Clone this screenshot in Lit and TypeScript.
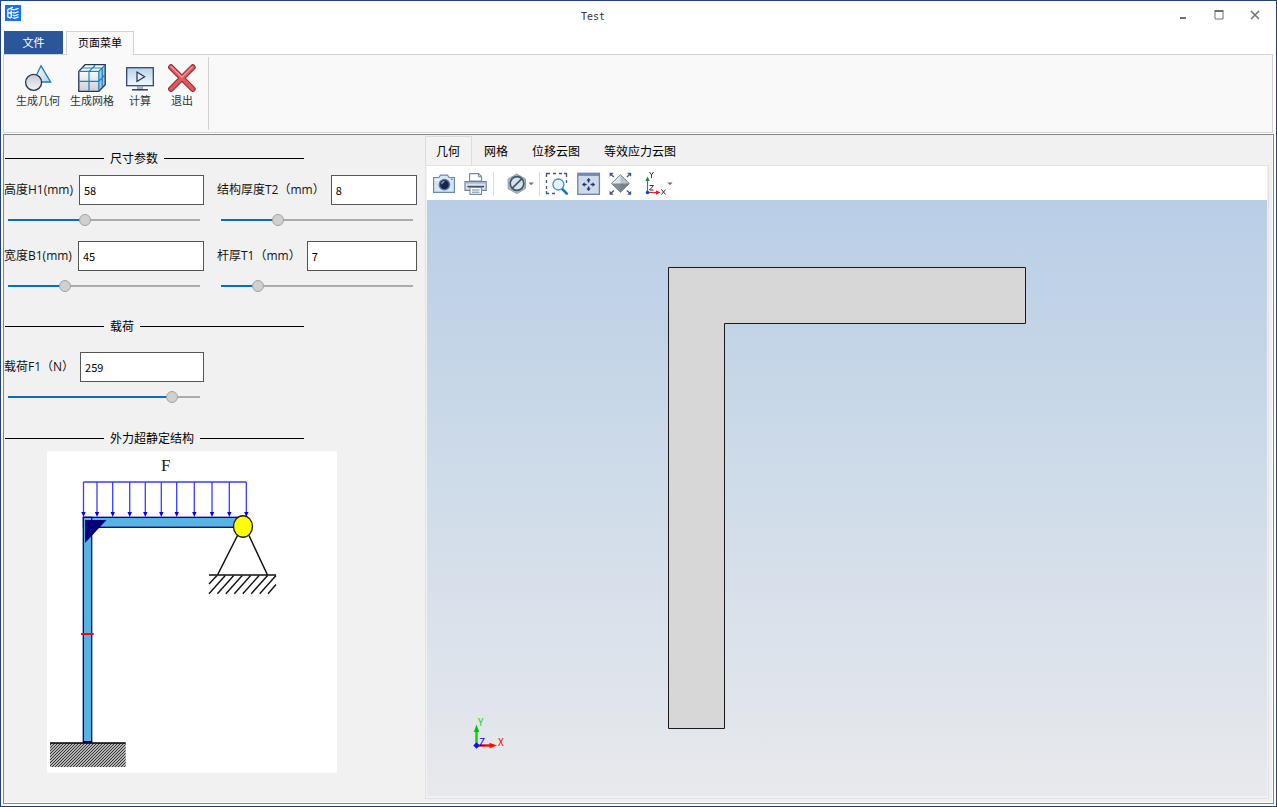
import { LitElement, html, svg, css } from "lit";
import { customElement, property, state } from "lit/decorators.js";

interface Param {
  key: string;
  label: string;
  value: number;
  max: number;
}

const SIZE_PARAMS: Param[] = [
  { key: "h1", label: "高度H1(mm)", value: 58, max: 147 },
  { key: "t2", label: "结构厚度T2（mm）", value: 8, max: 28 },
  { key: "b1", label: "宽度B1(mm)", value: 45, max: 159 },
  { key: "t1", label: "杆厚T1（mm）", value: 7, max: 41 },
];

const LOAD_PARAMS: Param[] = [{ key: "f1", label: "载荷F1（N）", value: 259, max: 295 }];

/* ---------- icons ---------- */

const logoIcon = html`<svg width="16" height="16" viewBox="0 0 16 16" aria-hidden="true">
  <rect width="16" height="16" fill="#1473e6" />
  <path d="M2.600 4.600 8 2.200M2.800 4.500v7.500M2.600 8h3.200M2.600 11.900 6 13.200M6.200 5.500v7.500" stroke="#fff" stroke-width="1.300" fill="none" />
  <path d="M5.500 3.800 9 4.900l4.600-1.600M7.500 7.300l2 .8 4-1.400M7.500 10l2 .9 4-1.400M7.500 12.500l2 .8 4-1.400" stroke="#fff" stroke-width="1.300" fill="none" />
</svg>`;

const geometryIcon = html`<svg width="28" height="28" viewBox="0 0 28 28" aria-hidden="true">
  <defs>
    <linearGradient id="tri" x1="0" y1="0" x2="1" y2="1"><stop offset="0" stop-color="#fff" /><stop offset="1" stop-color="#b4d4ee" /></linearGradient>
    <linearGradient id="ball" x1="0" y1="0" x2="0" y2="1"><stop offset="0" stop-color="#c6cad4" /><stop offset="1" stop-color="#f4f4f8" /></linearGradient>
  </defs>
  <path d="M17 1.800 26.600 18H9z" fill="url(#tri)" stroke="#1e78b8" stroke-width="1.300" />
  <circle cx="9.600" cy="18.400" r="8" fill="url(#ball)" stroke="#26324f" stroke-width="1.300" />
</svg>`;

const meshIcon = html`<svg width="28" height="28" viewBox="0 0 28 28" aria-hidden="true">
  <defs>
    <linearGradient id="cube" x1="0" y1="0" x2="0" y2="1"><stop offset="0" stop-color="#fafbfd" /><stop offset="1" stop-color="#c9cdd8" /></linearGradient>
  </defs>
  <path d="M.8 7.400 7 .7h20.200l-6.400 6.700z" fill="#fff" />
  <path d="M20.800 7.400 27.200.7v20l-6.400 6.600z" fill="#a9c6e0" />
  <path d="M.8 7.400h20v20H.8z" fill="url(#cube)" />
  <path d="M.8 7.400 7 .7h20.200v20l-6.400 6.600H.8z" fill="none" stroke="#26324f" stroke-width="1.300" />
  <path d="M1.400 7.400h19.400v19.400M20.800 7.400l6-6.200M11 7.400v19.400M1.400 17.400h19.400l5.800-6.200M11 7.400 17.200 1.300M4.400 4h19.800v19.200" fill="none" stroke="#1580c4" stroke-width="1.200" />
</svg>`;

const computeIcon = html`<svg width="28" height="28" viewBox="0 0 28 28" aria-hidden="true">
  <defs>
    <linearGradient id="screen" x1="0" y1="0" x2="0" y2="1"><stop offset="0" stop-color="#b6d3ea" /><stop offset="1" stop-color="#f3f8fc" /></linearGradient>
  </defs>
  <rect x=".7" y="3.700" width="26.600" height="18" fill="url(#screen)" stroke="#33486c" stroke-width="1.300" />
  <path d="M11 8v9.400l7.600-4.700z" fill="#e2edf7" stroke="#22304f" stroke-width="1.200" />
  <path d="M11.500 22.300h5v3.400h-5z" fill="#aab4c6" stroke="#7d8aa2" stroke-width=".6" />
  <path d="M6 25.800h16" stroke="#26324f" stroke-width="1.400" />
</svg>`;

const exitIcon = html`<svg width="28" height="28" viewBox="0 0 28 28" aria-hidden="true">
  <path d="M3 3.200 24.800 25M24.800 3.200 3 25" stroke="#8c2c33" stroke-width="5.800" stroke-linecap="round" />
  <path d="M3 3.200 24.800 25M24.800 3.200 3 25" stroke="#dd5a5c" stroke-width="3.800" stroke-linecap="round" />
  <path d="M3 2.600 13.900 13.400 24.400 2.800" fill="none" stroke="#f0a09c" stroke-width="1.200" stroke-linecap="round" />
</svg>`;

const cameraIcon = html`<svg width="24" height="24" viewBox="0 0 24 24" aria-hidden="true">
  <path d="M1.600 5.500h5.200l1.800-2.400h6.800l1.800 2.400h5.200v14.900H1.600z" fill="#d5e6f5" stroke="#6d86ae" stroke-width="1.200" />
  <path d="M2.600 8h18.800" stroke="#fff" />
  <circle cx="12.400" cy="12.600" r="5.900" fill="#5c749b" />
  <circle cx="12.400" cy="12.600" r="4.400" fill="#13254b" />
  <path d="M9.800 12.200a2.600 2.600 0 0 1 2.600-2.600" fill="none" stroke="#9db4d6" stroke-width="1.100" />
  <path d="M18.700 7.400h2" stroke="#6d86ae" stroke-width="1.400" />
</svg>`;

const printerIcon = html`<svg width="24" height="24" viewBox="0 0 24 24" aria-hidden="true">
  <path d="M5.600 9V1.600h9l3 3V9z" fill="#fff" stroke="#7787a3" stroke-width="1.100" />
  <path d="M14.400 1.600v3.200h3.200" fill="none" stroke="#7787a3" />
  <path d="M1 9.600h21.200v8.800H1z" fill="#dde3ee" stroke="#6f82a6" stroke-width="1.200" />
  <path d="M2 10.800h19.500" stroke="#a5b2c9" stroke-width="1.600" />
  <path d="M3.400 14.600h16.600" stroke="#33476e" stroke-width="1.600" />
  <path d="M6 15.400h11.500v7H6z" fill="#fff" stroke="#7787a3" stroke-width="1.100" />
  <path d="M8 18h7.500M8 20.200h7.500" stroke="#6f82a6" />
</svg>`;

const hideIcon = html`<svg width="30" height="24" viewBox="0 0 30 24" aria-hidden="true">
  <path d="m10.800 2 8.700 5v9.600l-8.700 5-8.700-5V7z" fill="#a9b8c2" stroke="#8fa1ad" />
  <circle cx="11" cy="11.500" r="6.800" fill="#d7e3ea" stroke="#3f586c" stroke-width="1.700" />
  <path d="M6.300 16.200 15.700 6.800" stroke="#3f586c" stroke-width="1.700" />
  <path d="M22.600 10.500h5.200l-2.600 2.800z" fill="#707070" />
</svg>`;

const zoomAreaIcon = html`<svg width="24" height="24" viewBox="0 0 24 24" aria-hidden="true">
  <path d="M1.500 5V1.500H5M8 1.500h3M14 1.500h3M19 1.500h2.500V5M21.500 8v3M1.500 8v3M1.500 14v3M1.500 19v2.500H4M7 21.500h3" fill="none" stroke="#3c5583" stroke-width="1.300" />
  <path d="m17.200 17 4.600 4.600" stroke="#1a73b8" stroke-width="2.600" stroke-linecap="round" />
  <circle cx="13.400" cy="12.500" r="5.500" fill="#e6f3fa" stroke="#3f8fbd" stroke-width="1.300" />
</svg>`;

const fitIcon = html`<svg width="24" height="24" viewBox="0 0 24 24" aria-hidden="true">
  <rect x=".8" y="1.300" width="21.600" height="21" fill="#cfdae9" stroke="#6880a8" stroke-width="1.300" />
  <path d="M1 2.600h21.200" stroke="#7189b2" stroke-width="2.600" />
  <path d="M11.600 7.500v3M11.600 14.500v3M6.600 12.500h3M13.600 12.500h3" stroke="#1e3566" stroke-width="1.600" />
  <path d="m9.400 8.600 2.200-2.700 2.200 2.700zM9.400 16.400l2.200 2.700 2.200-2.700zM7.700 10.300 5 12.500l2.700 2.200zM15.500 10.300l2.700 2.200-2.700 2.200z" fill="#1e3566" />
</svg>`;

const isoIcon = html`<svg width="24" height="24" viewBox="0 0 24 24" aria-hidden="true">
  <path d="m11.400 2.800 9 8.700-9 8.800-9-8.800z" fill="#e1e4e8" stroke="#7e8896" />
  <path d="M2.400 11.500h18l-9 8.800z" fill="#838c99" />
  <path d="M11.400 2.800v17.500l9-8.800z" fill="#59616e" fill-opacity=".25" />
  <path d="M4.800 5 1.500 1.700M18 5l3.300-3.300M4.800 18.500l-3.300 3.300M18 18.500l3.300 3.300" stroke="#3c5583" stroke-width="1.300" />
  <path d="M.6.800h4L.6 4.800zM22.200.800h-4l4 4zM.6 22.700h4l-4-4zM22.200 22.700h-4l4-4z" fill="#3c5583" />
</svg>`;

const axesIcon = html`<svg width="30" height="24" viewBox="0 0 30 24" aria-hidden="true">
  <path d="M2.500 20V7" stroke="#1c9a4a" stroke-width="1.200" />
  <path d="m.3 9 2.200-4.500L4.700 9z" fill="#1c8a44" />
  <path d="M2.500 20.500h10" stroke="#e0202a" stroke-width="1.300" />
  <path d="m11 18.300 4.500 2.200-4.500 2.200z" fill="#e0202a" />
  <circle cx="2.500" cy="20.500" r="1.700" fill="#1c3c9a" />
  <path d="m4.500 0 2 2.800L8.500 0M6.500 2.800V6M4.500 13.500h4L4.500 18h4M16.500 17.500l4 5M20.500 17.500l-4 5" fill="none" stroke="#333" />
  <path d="M22.400 10.500h5.200L25 13.300z" fill="#707070" />
</svg>`;

/* ---------- slider field ---------- */

@customElement("param-field")
class ParamField extends LitElement {
  static styles = css`
    :host {
      display: flex;
      flex-direction: column;
      gap: 5px;
      min-width: 0;
    }
    .row {
      display: flex;
      align-items: center;
      gap: 6px;
    }
    .label {
      flex: none;
      font: 12px/16px "Open Sans", "Noto Sans CJK SC", sans-serif;
      color: #111;
    }
    .box {
      box-sizing: border-box;
      flex: 1;
      min-width: 0;
      width: 0;
      height: 30px;
      padding: 0 4px;
      border: 1px solid #555;
      border-radius: 0;
      background: #fff;
      color: #000;
      font: 11px/16px "Noto Sans CJK SC", sans-serif;
      outline: none;
    }
    .range {
      appearance: none;
      -webkit-appearance: none;
      box-sizing: border-box;
      height: 20px;
      margin: 0 4px;
      background: none;
      outline: none;
    }
    .range::-webkit-slider-runnable-track {
      height: 2px;
      background: linear-gradient(
        to right,
        #0a6cbf calc(6px + (100% - 12px) * var(--fill)),
        #ababab calc(6px + (100% - 12px) * var(--fill))
      );
    }
    .range::-webkit-slider-thumb {
      -webkit-appearance: none;
      box-sizing: border-box;
      width: 12px;
      height: 12px;
      margin-top: -5px;
      border: 1px solid #a3a3a3;
      border-radius: 50%;
      background: #d0d0d0;
    }
  `;

  @property({ attribute: false }) param!: Param;
  @state() private current = 0;

  willUpdate(changed: Map<string, unknown>) {
    if (changed.has("param")) this.current = this.param.value;
  }

  private onInput(e: Event) {
    const n = Number((e.target as HTMLInputElement).value);
    if (!Number.isNaN(n)) this.current = Math.min(this.param.max, Math.max(0, n));
  }

  render() {
    const { key, label, max } = this.param;
    return html`
      <div class="row">
        <label class="label" for=${key}>${label}</label>
        <input class="box" id=${key} type="text" .value=${String(this.current)} @change=${this.onInput} />
      </div>
      <input
        class="range"
        type="range"
        aria-label=${label}
        min="0"
        max=${max}
        .value=${String(this.current)}
        style="--fill:${this.current / max}"
        @input=${this.onInput}
      />
    `;
  }
}

/* ---------- structural sketch ---------- */

@customElement("structure-sketch")
class StructureSketch extends LitElement {
  static styles = css`
    :host {
      display: block;
    }
    .sketch {
      display: block;
      width: 290px;
      background: #fff;
    }
    .force {
      font-family: "Liberation Serif", serif;
      font-size: 17px;
      fill: #222;
    }
  `;

  render() {
    const arrows = [36.500, 50, 65.700, 82.700, 98.300, 114.300, 129.700, 147.300, 165, 182.300, 199.300];
    const hatch = [0, 1, 2, 3, 4, 5, 6];
    return html`<svg class="sketch" viewBox="0 0 290 322" role="img" aria-label="外力超静定结构">
      <defs>
        <pattern id="soil" width="3" height="3" patternUnits="userSpaceOnUse">
          <rect width="3" height="3" fill="#b4b4b4" />
          <path d="M-1 1 1-1M0 3 3 0M2 4 4 2" stroke="#333" stroke-width="1" />
        </pattern>
      </defs>
      <text class="force" x="114" y="20">F</text>
      <path d="M36.500 31H199.300" stroke="#3a3aff" stroke-width="1.500" />
      ${arrows.map(
        (x) => svg`<path d="M${x} 31V62" stroke="#3c3cff" stroke-width="1.300" />
          <path d="M${x - 2.200} 61h4.400L${x} 66z" fill="#0000e6" />`
      )}
      <rect x="36.500" y="66.300" width="154" height="10" fill="#56b4e2" stroke="#00007c" stroke-width="1.300" />
      <rect x="36.300" y="66.300" width="8.400" height="224.700" fill="#56b4e2" stroke="#00007c" stroke-width="1.300" />
      <path d="M38 69h21.500L38 92z" fill="#00007c" />
      <path d="M34 183h12.700" stroke="#f00" stroke-width="2" />
      <path d="M190.500 84.500 170.500 124M202 84.500 220.500 124M162 124h67" stroke="#111" stroke-width="1.500" />
      <path
        d="M162 133 170 124.500M221 142.700 229 133.500"
        stroke="#111"
        stroke-width="1.400"
      />
      ${hatch.map(
        (i) => svg`<path d="M${162 + i * 8.450} 142.700 L${178.300 + i * 8.450} 124.500" stroke="#111" stroke-width="1.400" />`
      )}
      <ellipse cx="196" cy="75.500" rx="9.500" ry="10.800" fill="#ff0" stroke="#222" stroke-width="1.400" />
      <rect x="3" y="292" width="75.700" height="24" fill="url(#soil)" />
      <path d="M3 292h75.700" stroke="#000" stroke-width="1.500" />
      <path d="M36 291h9" stroke="#00004c" stroke-width="2" />
    </svg>`;
  }
}

/* ---------- application window ---------- */

@customElement("app-root")
class AppRoot extends LitElement {
  static styles = css`
    :host {
      display: flex;
      flex-direction: column;
      box-sizing: border-box;
      min-height: 100vh;
      padding: 0 2px 2px;
      border: 1px solid #1f4278;
      background: #fff;
      font: 12px/16px "Noto Sans CJK SC", sans-serif;
      color: #000;
    }
    button {
      margin: 0;
      padding: 0;
      border: 0;
      border-radius: 0;
      background: none;
      font: inherit;
      color: inherit;
    }
    svg {
      display: block;
    }

    .titlebar {
      display: flex;
      align-items: flex-start;
      height: 30px;
      padding: 0 1px 0 2px;
    }
    .logo {
      padding-top: 4px;
    }
    .title {
      flex: 1;
      margin: 0;
      padding-top: 8px;
      text-align: center;
      font: 10px/16px "DejaVu Sans Mono", monospace;
      color: #333;
    }
    .winbtn {
      display: grid;
      place-items: center;
      width: 36px;
      height: 28px;
    }

    .ribbon-tabs {
      display: flex;
      align-items: flex-end;
      gap: 3px;
      padding-left: 1px;
      font-size: 11px;
    }
    .file {
      width: 59px;
      height: 23px;
      padding-bottom: 2px;
      background: #2b579a;
      color: #fff;
    }
    .page-tab {
      position: relative;
      box-sizing: border-box;
      height: 24px;
      margin-bottom: -1px;
      padding: 0 11px 3px;
      border: 1px solid #d2d2d2;
      border-bottom: 0;
      background: #f9f9f9;
    }
    .ribbon {
      display: flex;
      box-sizing: border-box;
      height: 79px;
      margin-right: 1px;
      padding: 2px 0;
      border: 1px solid #d2d2d2;
      background: #f9f9f9;
    }
    .ribbon-group {
      display: flex;
      align-items: flex-start;
      padding: 7px 5px 0 7px;
      border-right: 1px solid #d2d2d2;
    }
    .action {
      display: flex;
      flex-direction: column;
      align-items: center;
      min-width: 42px;
      padding: 0 5px;
      font-size: 11px;
      line-height: 16px;
      color: #333;
    }

    .main {
      display: flex;
      flex: 1;
      margin-top: 1px;
      border: 1px solid #80858f;
      background: #f1f1f1;
      box-shadow: inset -1px -1px #fff;
    }

    .side {
      flex: none;
      box-sizing: border-box;
      width: 421px;
      padding-top: 13px;
    }
    .heading {
      display: grid;
      grid-template-columns: 99px auto 1fr;
      align-items: center;
      gap: 6px;
      width: 299px;
      height: 20px;
      margin: 0 0 0 1px;
      font: inherit;
    }
    .heading::before,
    .heading::after {
      content: "";
      height: 1px;
      background: #000;
    }
    .fields {
      display: grid;
      grid-template-columns: 200px 200px;
      gap: 11px 13px;
      padding: 7px 0 20px;
    }
    .fields.load {
      padding: 16px 0 21px;
    }
    .picture {
      margin: 3px 0 0 43px;
    }

    .work {
      display: flex;
      flex: 1;
      flex-direction: column;
      min-width: 0;
      padding: 1px 4px 4px 0;
    }
    .tabs {
      display: flex;
      height: 29px;
    }
    .tab {
      box-sizing: border-box;
      padding: 0 12px;
    }
    .tab.active {
      padding: 0 11px 0 10px;
      border: 1px solid #dcdcdc;
      border-bottom: 0;
      background: #f3f3f3;
    }
    .pane {
      display: flex;
      flex: 1;
      flex-direction: column;
      padding: 0 1px 2px;
      border: 1px solid #e2e2e2;
    }
    .toolbar {
      display: flex;
      align-items: center;
      box-sizing: border-box;
      height: 34px;
      padding: 1px 0 0 5px;
      background: #fff;
    }
    .tools {
      display: flex;
      gap: 8px;
      padding: 0 5px;
      border-right: 1px solid #ddd;
    }
    .tools:first-child {
      padding-left: 0;
    }
    .tools.drop {
      padding: 0 3px 0 12px;
    }
    .tools:last-child {
      border: 0;
    }
    .axes {
      margin-left: 4px;
    }
    .viewport {
      position: relative;
      display: grid;
      flex: 1;
      place-items: center;
      background: linear-gradient(#b9cee6, #d0dce9 50%, #e8e9ec);
    }
    .triad {
      position: absolute;
      left: 44px;
      bottom: 46px;
    }
    .axis {
      font: 10px "Noto Sans CJK SC", sans-serif;
    }
  `;

  @state() private tab = 0;

  render() {
    const actions = [
      { label: "生成几何", icon: geometryIcon },
      { label: "生成网格", icon: meshIcon },
      { label: "计算", icon: computeIcon },
      { label: "退出", icon: exitIcon },
    ];
    const tabs = ["几何", "网格", "位移云图", "等效应力云图"];

    return html`
      <header class="titlebar">
        <span class="logo">${logoIcon}</span>
        <h1 class="title">Test</h1>
        <button class="winbtn" aria-label="最小化">
          <svg width="10" height="10" viewBox="0 0 10 10"><path d="M2 8h6" stroke="#707070" stroke-width="2" /></svg>
        </button>
        <button class="winbtn" aria-label="最大化">
          <svg width="10" height="10" viewBox="0 0 10 10">
            <path d="M1 1.500v7.500h8V1.500" fill="none" stroke="#707070" /><path d="M.5 1h9" stroke="#707070" stroke-width="2" />
          </svg>
        </button>
        <button class="winbtn" aria-label="关闭">
          <svg width="10" height="10" viewBox="0 0 10 10"><path d="m1 1 8 8M9 1 1 9" stroke="#707070" stroke-width="1.500" /></svg>
        </button>
      </header>

      <nav class="ribbon-tabs">
        <button class="file">文件</button>
        <button class="page-tab">页面菜单</button>
      </nav>
      <div class="ribbon">
        <div class="ribbon-group">
          ${actions.map((a) => html`<button class="action">${a.icon}<span>${a.label}</span></button>`)}
        </div>
      </div>

      <main class="main">
        <section class="side">
          <h2 class="heading">尺寸参数</h2>
          <div class="fields">${SIZE_PARAMS.map((p) => html`<param-field .param=${p}></param-field>`)}</div>
          <h2 class="heading">载荷</h2>
          <div class="fields load">${LOAD_PARAMS.map((p) => html`<param-field .param=${p}></param-field>`)}</div>
          <h2 class="heading">外力超静定结构</h2>
          <structure-sketch class="picture"></structure-sketch>
        </section>

        <section class="work">
          <div class="tabs" role="tablist">
            ${tabs.map(
              (t, i) => html`<button
                class="tab ${i === this.tab ? "active" : ""}"
                role="tab"
                aria-selected=${i === this.tab ? "true" : "false"}
                @click=${() => (this.tab = i)}
              >${t}</button>`
            )}
          </div>
          <div class="pane">
            <div class="toolbar">
              <div class="tools">
                <button aria-label="截图">${cameraIcon}</button>
                <button aria-label="打印">${printerIcon}</button>
              </div>
              <div class="tools drop">
                <button aria-label="隐藏">${hideIcon}</button>
              </div>
              <div class="tools">
                <button aria-label="框选缩放">${zoomAreaIcon}</button>
                <button aria-label="平移">${fitIcon}</button>
                <button aria-label="适应窗口">${isoIcon}</button>
                <button class="axes" aria-label="视图方向">${axesIcon}</button>
              </div>
            </div>
            <div class="viewport">
              <svg width="358" height="462" viewBox="0 0 358 462" role="img" aria-label="几何">
                <path d="M.5.5h357v56h-301v405H.5z" fill="#d7d7d7" stroke="#1a1a1a" />
              </svg>
              <svg class="triad" width="36" height="38" viewBox="0 0 36 38" aria-hidden="true">
                <path d="M5.500 34V18" stroke="#00d800" stroke-width="2.400" />
                <path d="m2.800 20 2.700-7.500L8.200 20z" fill="#00c400" />
                <path d="M6 33.500h14" stroke="#f01010" stroke-width="2.400" />
                <path d="m18.500 30.800 7.500 2.700-7.500 2.700z" fill="#f01010" />
                <path d="m5.500 30.300 3.200 3.200-3.200 3.200-3.200-3.200z" fill="#1414d8" />
                <text class="axis" x="7" y="14" fill="#00d800">Y</text>
                <text class="axis" x="8" y="34" fill="#0000ff">Z</text>
                <text class="axis" x="27" y="34" fill="#ff0000">X</text>
              </svg>
            </div>
          </div>
        </section>
      </main>
    `;
  }
}
